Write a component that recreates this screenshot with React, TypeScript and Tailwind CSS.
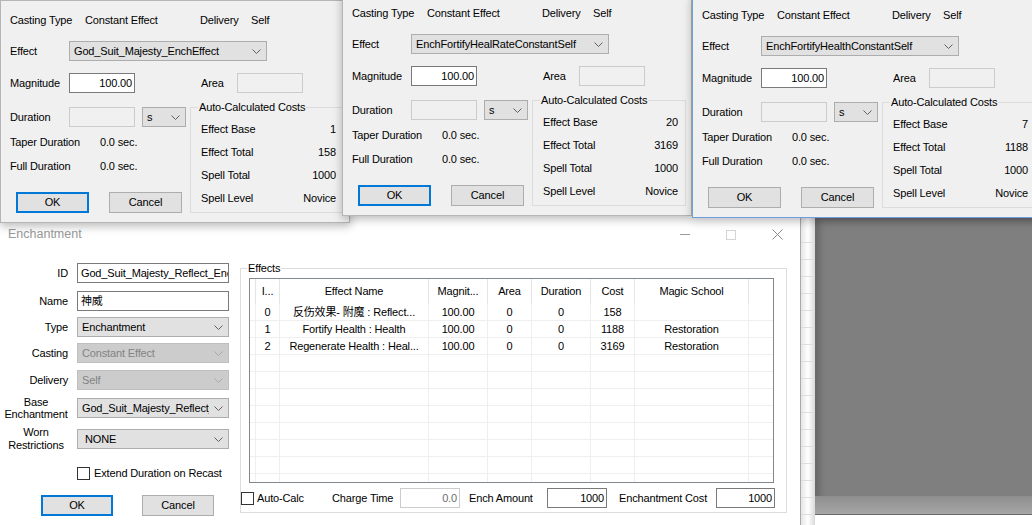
import React from "react";

function Chevron({ color = "#606060" }: { color?: string }) {
  return (
    <svg width="9" height="5" viewBox="0 0 9 5">
      <path d="M0.5 0.5 L4.5 4.5 L8.5 0.5" fill="none" stroke={color} strokeWidth="1" />
    </svg>
  );
}

function Combo({ w, text, disabled = false, pad = "pl-[4px]" }: { w: string; text: string; disabled?: boolean; pad?: string }) {
  return (
    <div
      className={`${w} h-[20px] flex items-center border ${
        disabled ? "bg-[#cccccc] border-[#bfbfbf] text-[#838383]" : "bg-[#e1e1e1] border-[#adadad]"
      }`}
    >
      <span className={`flex-1 overflow-hidden whitespace-nowrap ${pad}`}>{text}</span>
      <span className="w-[19px] flex justify-center">
        <Chevron color={disabled ? "#a8a8a8" : "#606060"} />
      </span>
    </div>
  );
}

function Edit({ w, text = "", align = "right", disabled = false, bg = "bg-white" }: { w: string; text?: string; align?: "left" | "right"; disabled?: boolean; bg?: string }) {
  return (
    <div
      className={`${w} h-[20px] flex items-center overflow-hidden whitespace-nowrap border ${
        disabled ? `border-[#cccccc] text-[#6d6d6d] ${bg}` : "border-[#7a7a7a] bg-white"
      } ${align === "right" ? "justify-end pr-[2px]" : "justify-start pl-[3px]"}`}
    >
      {text}
    </div>
  );
}

function Btn({ w, label, isDefault = false }: { w: string; label: string; isDefault?: boolean }) {
  return (
    <button
      type="button"
      className={`${w} h-[21px] flex items-center justify-center bg-[#e1e1e1] ${
        isDefault ? "border-2 border-[#0078d7]" : "border border-[#adadad]"
      }`}
    >
      {label}
    </button>
  );
}

interface DialogProps {
  pos: string;
  frame: string;
  effect: string;
  base: string;
  total: string;
  okDefault: boolean;
}

function EffectDialog({ pos, frame, effect, base, total, okDefault }: DialogProps) {
  return (
    <div className={`absolute ${pos} w-[350px] h-[223px] bg-[#f0f0f0] border ${frame} shadow-[0_3px_9px_rgba(0,0,0,0.28)] pl-[9px] pt-[9px]`}>
      <div className="flex items-center h-[20px]">
        <span className="w-[75px]">Casting Type</span>
        <span className="w-[115px]">Constant Effect</span>
        <span className="w-[51px]">Delivery</span>
        <span>Self</span>
      </div>
      <div className="flex items-center h-[20px] mt-[11px]">
        <span className="w-[59px]">Effect</span>
        <Combo w="w-[198px]" text={effect} />
      </div>
      <div className="flex items-center h-[20px] mt-[12px]">
        <span className="w-[59px]">Magnitude</span>
        <Edit w="w-[66px]" text="100.00" />
        <span className="ml-[66px] w-[36px]">Area</span>
        <Edit w="w-[66px]" disabled bg="bg-[#f0f0f0]" />
      </div>
      <div className="flex mt-[8px]">
        <div className="w-[180px] pt-[6px]">
          <div className="flex items-center h-[20px]">
            <span className="w-[59px]">Duration</span>
            <Edit w="w-[66px]" disabled bg="bg-[#f0f0f0]" />
            <div className="ml-[7px]">
              <Combo w="w-[44px]" text="s" />
            </div>
          </div>
          <div className="flex items-center h-[16px] mt-[7px]">
            <span className="w-[90px]">Taper Duration</span>
            <span>0.0 sec.</span>
          </div>
          <div className="flex items-center h-[16px] mt-[8px]">
            <span className="w-[90px]">Full Duration</span>
            <span>0.0 sec.</span>
          </div>
          <div className="flex mt-[18px]">
            <div className="ml-[6px]">
              <Btn w="w-[73px]" label="OK" isDefault={okDefault} />
            </div>
            <div className="ml-[20px]">
              <Btn w="w-[73px]" label="Cancel" />
            </div>
          </div>
        </div>
        <fieldset className="w-[154px] h-[112px] border border-[#dcdcdc] pl-[10px] pr-[7px] pt-[4px]">
          <legend className="-ml-[3px] px-[1px] leading-[13px]">Auto-Calculated Costs</legend>
          {[
            ["Effect Base", base],
            ["Effect Total", total],
            ["Spell Total", "1000"],
            ["Spell Level", "Novice"],
          ].map(([k, v]) => (
            <div key={k} className="flex items-center justify-between h-[23px]">
              <span>{k}</span>
              <span>{v}</span>
            </div>
          ))}
        </fieldset>
      </div>
    </div>
  );
}

const cols = ["w-[6px]", "w-[24px]", "w-[149px]", "w-[59px]", "w-[44px]", "w-[59px]", "w-[44px]", "w-[114px]", "flex-1"];
const heads = ["", "I...", "Effect Name", "Magnit...", "Area", "Duration", "Cost", "Magic School", ""];
const effectRows = [
  ["", "0", "反伤效果- 附魔 : Reflect...", "100.00", "0", "0", "158", "", ""],
  ["", "1", "Fortify Health : Health", "100.00", "0", "0", "1188", "Restoration", ""],
  ["", "2", "Regenerate Health : Heal...", "100.00", "0", "0", "3169", "Restoration", ""],
  ...Array.from({ length: 8 }, () => ["", "", "", "", "", "", "", "", ""]),
];

function FormRow({ label, children, mt }: { label: React.ReactNode; children: React.ReactNode; mt: string }) {
  return (
    <div className={`flex items-center h-[20px] ${mt}`}>
      <div className="w-[77px] pr-[9px] text-right">{label}</div>
      {children}
    </div>
  );
}

function EnchantmentWindow() {
  return (
    <div className="absolute left-0 top-[214px] w-[801px] h-[311px] bg-white border-r border-[#a9a9a9] flex flex-col">
      <div className="h-[38px] pt-[3px] flex items-center justify-between shrink-0">
        <span className="pl-[8px] text-[12.5px] tracking-normal text-[#999999]">Enchantment</span>
        <div className="flex h-full">
          <div className="w-[46px] flex items-center justify-center">
            <div className="w-[10px] h-px bg-[#9a9a9a]" />
          </div>
          <div className="w-[46px] flex items-center justify-center">
            <div className="w-[10px] h-[10px] border border-[#d4d4d4]" />
          </div>
          <div className="w-[46px] flex items-center justify-center">
            <svg width="11" height="11" viewBox="0 0 11 11">
              <path d="M0.5 0.5 L10.5 10.5 M10.5 0.5 L0.5 10.5" stroke="#8a8a8a" strokeWidth="1" />
            </svg>
          </div>
        </div>
      </div>

      <div className="flex">
        <div className="w-[240px]">
          <FormRow label="ID" mt="mt-[11px]">
            <Edit w="w-[152px]" text="God_Suit_Majesty_Reflect_Enchantment" align="left" />
          </FormRow>
          <FormRow label="Name" mt="mt-[8px]">
            <Edit w="w-[152px]" text="神威" align="left" />
          </FormRow>
          <FormRow label="Type" mt="mt-[6px]">
            <Combo w="w-[152px]" text="Enchantment" />
          </FormRow>
          <FormRow label="Casting" mt="mt-[6px]">
            <Combo w="w-[152px]" text="Constant Effect" disabled />
          </FormRow>
          <FormRow label="Delivery" mt="mt-[7px]">
            <Combo w="w-[152px]" text="Self" disabled />
          </FormRow>
          <div className="flex items-center h-[20px] mt-[8px]">
            <div className="w-[77px] pr-[5px] text-center leading-[12px]">
              Base
              <br />
              Enchantment
            </div>
            <Combo w="w-[152px]" text="God_Suit_Majesty_Reflect_Enchantment" />
          </div>
          <div className="flex items-center h-[20px] mt-[11px]">
            <div className="w-[77px] pr-[5px] text-center leading-[13px]">
              Worn
              <br />
              Restrictions
            </div>
            <Combo w="w-[152px]" text="NONE" pad="pl-[7px]" />
          </div>
          <div className="flex items-center h-[14px] mt-[17px] pl-[77px]">
            <div className="w-[13px] h-[13px] border border-[#333333] bg-white" />
            <span className="ml-[4px]">Extend Duration on Recast</span>
          </div>
          <div className="flex mt-[15px]">
            <div className="ml-[41px]">
              <Btn w="w-[72px]" label="OK" isDefault />
            </div>
            <div className="ml-[29px]">
              <Btn w="w-[72px]" label="Cancel" />
            </div>
          </div>
        </div>

        <fieldset className="mt-[10px] w-[547px] h-[251px] border border-[#dcdcdc] pl-[8px]">
          <legend className="-ml-[2px] px-[1px] leading-[13px]">Effects</legend>
          <div className="mt-[3px] w-[525px] h-[205px] border border-[#828790] bg-white overflow-hidden">
            <div className="flex h-[25px]">
              {heads.map((h, i) => (
                <div
                  key={i}
                  className={`${cols[i]} flex items-center justify-center whitespace-nowrap ${
                    i < heads.length - 1 ? "border-r border-[#e5e5e5]" : ""
                  }`}
                >
                  {h}
                </div>
              ))}
            </div>
            {effectRows.map((r, ri) => (
              <div key={ri} className="flex h-[17px]">
                {r.map((c, ci) => (
                  <div
                    key={ci}
                    className={`${cols[ci]} flex items-center justify-center whitespace-nowrap overflow-hidden border-b border-[#efefef] ${
                      ci < r.length - 1 ? "border-r" : ""
                    }`}
                  >
                    {c}
                  </div>
                ))}
              </div>
            ))}
          </div>
          <div className="flex items-center h-[20px] mt-[5px] -ml-[8px]">
            <div className="w-[13px] h-[13px] border border-[#333333] bg-white" />
            <span className="ml-[3px] w-[75px]">Auto-Calc</span>
            <span className="w-[68px]">Charge Time</span>
            <Edit w="w-[60px]" text="0.0" disabled />
            <span className="ml-[9px] w-[78px]">Ench Amount</span>
            <Edit w="w-[60px]" text="1000" />
            <span className="ml-[12px] w-[97px]">Enchantment Cost</span>
            <Edit w="w-[59px]" text="1000" />
          </div>
        </fieldset>
      </div>
    </div>
  );
}

function BackWindow() {
  return (
    <div className="absolute left-[801px] top-[214px] w-[231px] h-[311px] flex">
      <div className="w-[14px] h-full bg-gradient-to-r from-[#e6e6e6] via-white to-[#d9d9d9] pt-[12px] flex flex-col">
        {Array.from({ length: 17 }, (_, i) => (
          <div key={i} className="h-[17px] shrink-0 border-b border-[#dedede]" />
        ))}
      </div>
      <div className="flex-1 flex flex-col">
        <div className="flex-1 bg-[#7f7f7f] shadow-[inset_5px_6px_6px_rgba(0,0,0,0.18)]" />
        <div className="h-[18px] bg-gradient-to-b from-[#8e8e8e] to-[#a6a6a6]" />
        <div className="h-[11px] bg-white border-t border-[#6b6b6b]" />
      </div>
    </div>
  );
}

export default function App() {
  return (
    <div className="relative w-[1032px] h-[525px] overflow-hidden bg-white text-black text-[11px] tracking-[-0.15px] font-['Liberation_Sans','Noto_Sans_CJK_SC',sans-serif]">
      <BackWindow />
      <EnchantmentWindow />
      <EffectDialog
        pos="left-0 top-0"
        frame="border-[#b5b5b5]"
        effect="God_Suit_Majesty_EnchEffect"
        base="1"
        total="158"
        okDefault
      />
      <EffectDialog
        pos="left-[342px] top-[-7px]"
        frame="border-[#b5b5b5]"
        effect="EnchFortifyHealRateConstantSelf"
        base="20"
        total="3169"
        okDefault
      />
      <EffectDialog
        pos="left-[692px] top-[-5px]"
        frame="border-[#6ca0dc]"
        effect="EnchFortifyHealthConstantSelf"
        base="7"
        total="1188"
        okDefault={false}
      />
    </div>
  );
}
